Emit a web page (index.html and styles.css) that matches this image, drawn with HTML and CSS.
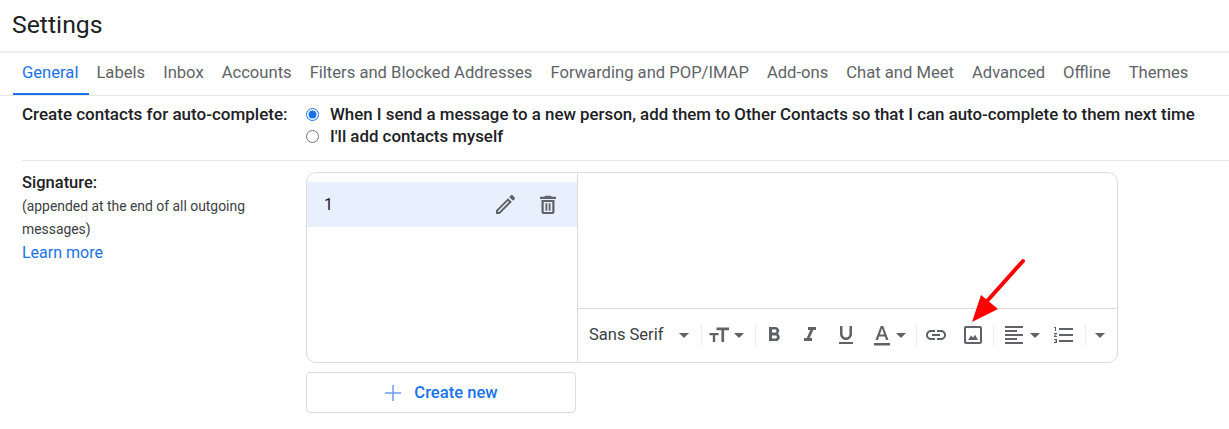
FILE: index.html
```html
<!DOCTYPE html>
<html lang="en">
<head>
    <meta charset="UTF-8">
    <meta name="viewport" content="width=device-width, initial-scale=1.0">
    <title>Settings</title>
    <link rel="stylesheet" href="styles.css">
</head>
<body>
    <header class="page-header">
        <h1>Settings</h1>
    </header>

    <nav class="tabs">
        <a class="tab tab-active">General</a>
        <a class="tab">Labels</a>
        <a class="tab">Inbox</a>
        <a class="tab">Accounts</a>
        <a class="tab">Filters and Blocked Addresses</a>
        <a class="tab">Forwarding and POP/IMAP</a>
        <a class="tab">Add-ons</a>
        <a class="tab">Chat and Meet</a>
        <a class="tab">Advanced</a>
        <a class="tab">Offline</a>
        <a class="tab">Themes</a>
    </nav>

    <section class="setting-row contacts-row">
        <div class="setting-label"><b>Create contacts for auto-complete:</b></div>
        <div class="radio-list">
            <label class="radio-item">
                <input type="radio" name="contacts" checked>
                <span>When I send a message to a new person, add them to Other Contacts so that I can auto-complete to them next time</span>
            </label>
            <label class="radio-item">
                <input type="radio" name="contacts">
                <span>I'll add contacts myself</span>
            </label>
        </div>
    </section>

    <section class="setting-row signature-row">
        <div class="setting-label signature-label">
            <b>Signature:</b>
            <p>(appended at the end of all outgoing messages)</p>
            <a class="learn-more">Learn more</a>
        </div>
        <div class="signature-area">
            <div class="signature-box">
                <div class="signature-list">
                    <div class="signature-item">
                        <span class="signature-name">1</span>
                        <svg class="icon item-icon" viewBox="0 0 24 24"><path fill-rule="evenodd" d="M3 21v-3.800L15 5.200 18.800 9 6.800 21zM5 19h1l9.900-9.900-1-1L5 18z"/><path d="M16.200 4l1.500-1.500c.6-.6 1.500-.6 2.100 0l1.700 1.700c.6.6.6 1.500 0 2.100L20 7.800z"/></svg>
                        <svg class="icon item-icon" viewBox="0 0 24 24"><path fill-rule="evenodd" d="M5.500 7v12c0 1.100.9 2 2 2h9c1.100 0 2-.9 2-2V7zM7.700 9h8.600v10H7.700z"/><path d="M15.700 3.800l-1-1H9.300l-1 1H4V6h16V3.800zM9.500 10.300h1.800v7.400H9.500zM12.700 10.300h1.800v7.400h-1.800z"/></svg>
                    </div>
                </div>
                <div class="signature-editor">
                    <div class="editor-body"></div>
                    <div class="toolbar">
                        <div class="tool-group group-font">
                            <span class="font-name">Sans Serif</span>
                            <span class="caret"></span>
                        </div>
                        <div class="tool-group group-size">
                            <svg class="icon tool-icon" viewBox="0 0 24 24"><path d="M2.500 10h9v2.200H8.200V19H5.800v-6.800H2.500zM9.500 4.500h12.500v2.700h-4.900V19h-2.700V7.200H9.500z"/></svg>
                            <span class="caret"></span>
                        </div>
                        <div class="tool-group group-format">
                            <svg class="icon tool-icon" viewBox="0 0 24 24"><path d="M15.6 10.79c.97-.67 1.65-1.77 1.65-2.79 0-2.26-1.75-4-4-4H7v14h7.04c2.09 0 3.71-1.7 3.71-3.79 0-1.52-.86-2.82-2.15-3.42zM10 6.500h3c.83 0 1.500.67 1.500 1.500s-.67 1.500-1.500 1.500h-3v-3zm3.500 9H10v-3h3.500c.83 0 1.500.67 1.500 1.500s-.67 1.500-1.500 1.500z"/></svg>
                            <svg class="icon tool-icon" viewBox="0 0 24 24"><path d="M10 4v3h2.210l-3.420 8H6v3h8v-3h-2.210l3.420-8H18V4z"/></svg>
                            <svg class="icon tool-icon" viewBox="0 0 24 24"><path d="M12 17c3.310 0 6-2.690 6-6V3h-2.500v8c0 1.930-1.570 3.500-3.500 3.500S8.500 12.930 8.500 11V3H6v8c0 3.310 2.690 6 6 6zm-7 2v2h14v-2H5z"/></svg>
                            <svg class="icon tool-icon" viewBox="0 0 24 24"><path d="M4 20h16v2.500H4zM5.490 17h2.420l1.270-3.580h5.650L16.090 17h2.420L13.250 3h-2.500L5.490 17zm4.420-5.610 2.030-5.790h.12l2.030 5.790H9.910z"/></svg>
                            <span class="caret caret-near"></span>
                        </div>
                        <div class="tool-group group-insert">
                            <svg class="icon tool-icon" viewBox="0 0 24 24"><path d="M3.900 12c0-1.710 1.390-3.100 3.100-3.100h4V7H7c-2.760 0-5 2.240-5 5s2.240 5 5 5h4v-1.900H7c-1.710 0-3.100-1.390-3.100-3.100zM8 13h8v-2H8v2zm9-6h-4v1.900h4c1.710 0 3.100 1.390 3.100 3.100s-1.390 3.100-3.100 3.100h-4V17h4c2.760 0 5-2.240 5-5s-2.240-5-5-5z"/></svg>
                            <svg class="icon tool-icon" viewBox="0 0 24 24"><path d="M19 5v14H5V5h14m0-2H5c-1.100 0-2 .9-2 2v14c0 1.100.9 2 2 2h14c1.100 0 2-.9 2-2V5c0-1.100-.9-2-2-2zm-4.860 8.860l-2 2.600L10 12.500 7 17h10l-2.860-5.140z"/></svg>
                        </div>
                        <div class="tool-group group-align">
                            <svg class="icon tool-icon" viewBox="0 0 24 24"><path d="M15 15H3v2h12v-2zm0-8H3v2h12V7zM3 13h18v-2H3v2zm0 8h18v-2H3v2zM3 3v2h18V3H3z"/></svg>
                            <span class="caret caret-near"></span>
                            <svg class="icon tool-icon" viewBox="0 0 24 24"><path d="M2 17h2v.5H3v1h1v.5H2v1h3v-4H2v1zm1-9h1V4H2v1h1v3zm-1 3h1.800L2 13.100v.9h3v-1H3.200L5 10.900V10H2v1zm5-6v2h14V5H7zm0 14h14v-2H7v2zm0-6h14v-2H7v2z"/></svg>
                        </div>
                        <div class="tool-group group-more">
                            <span class="caret"></span>
                        </div>
                    </div>
                </div>
            </div>
            <button class="btn-create" type="button">
                <svg class="plus-icon" viewBox="0 0 16 16"><path d="M7.250 0h1.500v7.250H16v1.500H8.750V16h-1.500V8.750H0v-1.500h7.250z"/></svg>
                <span>Create new</span>
            </button>
        </div>
    </section>

    <!-- red annotation arrow drawn over the toolbar -->
    <svg class="annotation" viewBox="0 0 1229 429">
        <path class="arrow-shaft" d="M1023 261L988 300"/>
        <path class="arrow-head" d="M972 322L981 295L998 309z"/>
    </svg>
</body>
</html>
```

FILE: styles.css
```css
body {
    font-family: Roboto, "Liberation Sans", sans-serif;
    background-color: #fff;
    color: #202124;
    margin: 0;
    width: 1229px;
    height: 429px;
    overflow: hidden;
    position: relative;
}

.page-header {
    height: 53px;
    box-sizing: border-box;
    border-bottom: 2px solid #eee;
    padding: 11px 0 0 12px;
}

.page-header h1 {
    margin: 0;
    font-size: 24.8px;
    line-height: 28px;
    font-weight: 400;
}

.tabs {
    display: flex;
    height: 43px;
    box-sizing: border-box;
    padding-left: 13px;
    border-bottom: 1px solid #e4e6e8;
}

.tab {
    padding: 0 9px;
    line-height: 39px;
    height: 42px;
    box-sizing: border-box;
    font-size: 16.6px;
    color: #5f6368;
    white-space: nowrap;
}

/* underline runs 2px past the tab, the next tab keeps its place */
.tab-active {
    color: #1a73e8;
    border-bottom: 2px solid #1a73e8;
    padding-right: 11px;
    margin-right: -2px;
}

.setting-row {
    display: flex;
    margin-left: 22px;
}

.setting-label {
    width: 284px;
    flex-shrink: 0;
    font-size: 16.5px;
    color: #202124;
}

.setting-label b {
    font-weight: 500;
}

.contacts-row {
    height: 65px;
    box-sizing: border-box;
    border-bottom: 1px solid #e4e6e8;
    padding-top: 7px;
    line-height: 22px;
}

.contacts-row .setting-label {
    font-size: 17px;
}

.radio-list {
    display: flex;
    flex-direction: column;
}

.radio-item {
    display: flex;
    align-items: center;
    height: 22px;
    font-size: 16.85px;
    font-weight: 500;
    white-space: nowrap;
}

.radio-item input {
    margin: 0 11px 0 0;
    width: 13px;
    height: 13px;
    accent-color: #1a73e8;
}

.signature-row {
    padding-top: 11px;
}

.signature-label {
    line-height: 23px;
    padding-right: 16px;
    box-sizing: border-box;
}

.signature-label b {
    display: block;
    line-height: 21px;
    margin-bottom: 2px;
}

.signature-label p {
    margin: 0;
    font-size: 13.9px;
    color: #3c4043;
}

.learn-more {
    color: #1a73e8;
    font-size: 16px;
}

.signature-area {
    display: flex;
    flex-direction: column;
    gap: 9px;
}

.signature-box {
    display: flex;
    width: 812px;
    height: 191px;
    box-sizing: border-box;
    border: 1px solid #dadce0;
    border-radius: 10px;
    overflow: hidden;
}

.signature-list {
    width: 271px;
    flex-shrink: 0;
    box-sizing: border-box;
    border-right: 1px solid #dadce0;
    padding-top: 9px;
}

.signature-item {
    display: flex;
    align-items: center;
    height: 45px;
    background-color: #e8f0fe;
    padding: 0 17px;
    gap: 19px;
}

.signature-name {
    flex: 1;
    font-size: 16px;
    margin-bottom: 1px;
}

.icon {
    fill: #5f6368;
    flex-shrink: 0;
}

.item-icon {
    width: 24px;
    height: 24px;
}

.signature-editor {
    flex: 1;
    display: flex;
    flex-direction: column;
}

.editor-body {
    height: 135px;
    border-bottom: 1px solid #dadce0;
}

.toolbar {
    flex: 1;
    display: flex;
    align-items: center;
    padding: 0 0 2px 11px;
}

.tool-group {
    display: flex;
    align-items: center;
    gap: 12px;
    height: 22px;
    border-right: 1px solid #eceef0;
}

.group-font {
    gap: 0;
    padding-right: 12px;
}

.group-size {
    gap: 3px;
    padding: 0 11px 0 5px;
}

.group-format {
    padding: 0 10px 0 6px;
}

.group-insert {
    gap: 13px;
    padding: 0 8px 0 7px;
}

.group-align {
    padding: 0 9px 0 8px;
}

.group-more {
    padding-left: 9px;
    border-right: none;
}

.font-name {
    font-size: 16.5px;
    color: #3c4043;
    width: 90px;
}

.caret {
    width: 0;
    height: 0;
    border-left: 5px solid transparent;
    border-right: 5px solid transparent;
    border-top: 5px solid #5f6368;
    margin-top: 1px;
}

.caret-near {
    margin-left: -10px;
}

.group-align .caret-near {
    margin-left: -8px;
}

.tool-icon {
    width: 24px;
    height: 24px;
}

.btn-create {
    display: flex;
    align-items: center;
    justify-content: center;
    gap: 13px;
    width: 270px;
    height: 41px;
    background-color: #fff;
    border: 1px solid #dadce0;
    border-radius: 4px;
    color: #1a73e8;
    font-family: inherit;
    font-size: 16.6px;
    font-weight: 500;
    padding: 0 0 0 1px;
}

.plus-icon {
    width: 16px;
    height: 16px;
    fill: #6b9ff0;
}

.annotation {
    position: absolute;
    top: 0;
    left: 0;
    width: 1229px;
    height: 429px;
    pointer-events: none;
}

.arrow-shaft {
    stroke: #fe0000;
    stroke-width: 4;
    stroke-linecap: round;
    fill: none;
}

.arrow-head {
    fill: #fe0000;
}
```
